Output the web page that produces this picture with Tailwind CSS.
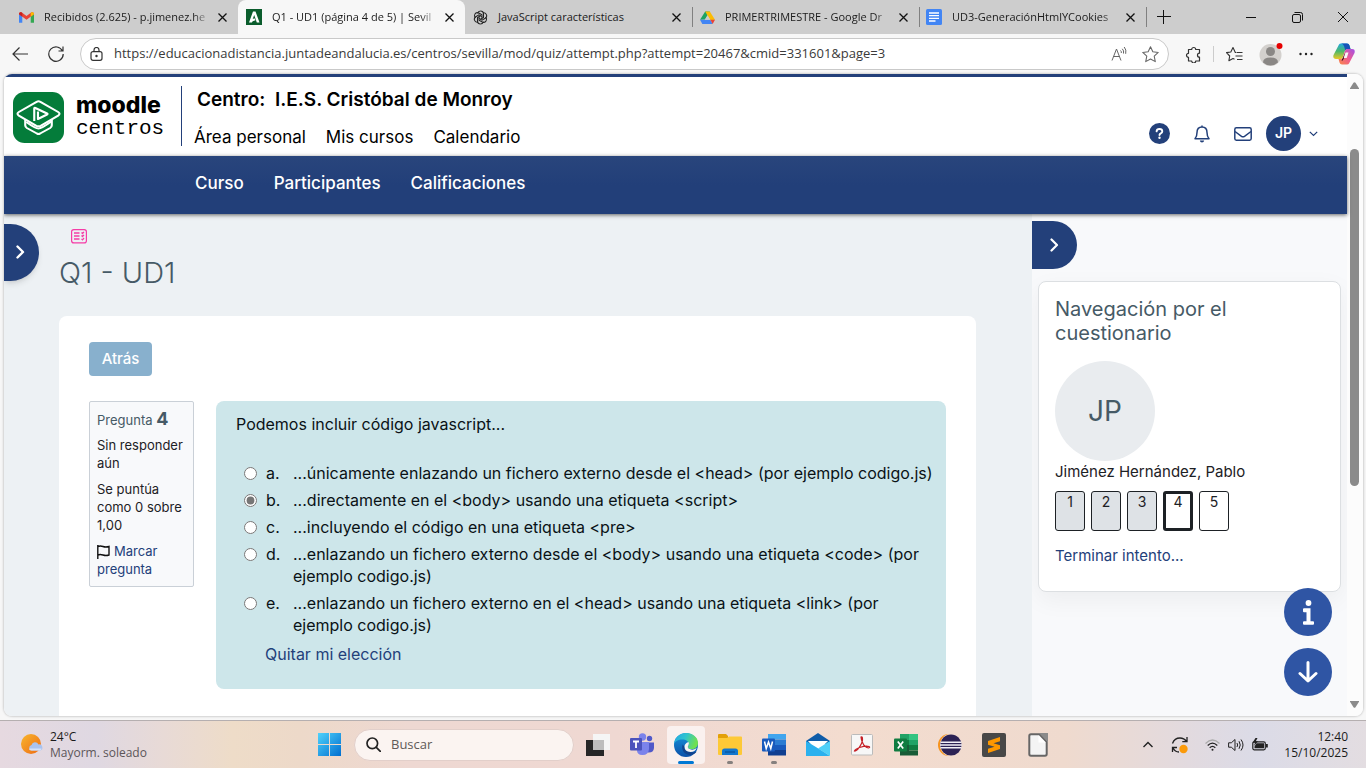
<!DOCTYPE html>
<html lang="es">
<head>
<meta charset="utf-8">
<title>Q1 - UD1 (página 4 de 5) | Sevilla</title>
<script src="https://cdn.jsdelivr.net/npm/@tailwindcss/browser@4"></script>
</head>
<body class="flex h-screen flex-col overflow-hidden bg-[#f7f7f7] font-['Open_Sans',sans-serif] text-xs text-[#1b1b1b]">

<!-- Tab strip -->
<header>
  <div class="flex h-[34px] items-stretch bg-[#cdcdcd] pl-[11px] text-[11px]" role="tablist">
    <div class="flex w-[227px] items-center pl-2 pr-2" role="tab">
      <svg class="h-[15px] w-[15px] shrink-0" viewBox="0 0 16 16"><path d="M0 4v9.500h3.500V7z" fill="#4285f4"/><path d="M16 4v9.500h-3.500V7z" fill="#34a853"/><path d="M0 4.500C0 2 2 2 3 2.700l5 3.800 5-3.800c1-.700 3-.700 3 1.800L8 10.500z" fill="#ea4335"/><path d="M12.500 3v4.200L16 4.500C16 2 14 2 13 2.700z" fill="#fbbc04"/><path d="M0 4.500C0 2.500 1.500 2 3 2.700l.5.400v4.100z" fill="#c5221f"/></svg>
      <span class="ml-[10px] flex-1 whitespace-nowrap mask-r-from-90%">Recibidos (2.625) - p.jimenez.he</span>
      <button class="ml-1 grid h-4 w-4 place-items-center" aria-label="Cerrar pestaña"><svg class="h-[9px] w-[9px]" viewBox="0 0 9 9" stroke="#111" stroke-width="1.300"><path d="M.5.5l8 8M8.500.5l-8 8"/></svg></button>
    </div>
    <div class="flex w-[227px] items-center rounded-t-lg bg-[#f7f7f7] pl-2 pr-2" role="tab" aria-selected="true">
      <svg class="h-4 w-4 shrink-0" viewBox="0 0 16 16"><path fill="#0a5c2c" d="M0 0h16v16H0z"/><path d="M3 13.500 7 2.500h2.500l4 11h-2.700L8.200 6l-1.500 4 1.800-.700 1 2-2.800 1-.8 1.200z" fill="#fff"/></svg>
      <span class="ml-[10px] flex-1 whitespace-nowrap mask-r-from-90%">Q1 - UD1 (página 4 de 5) | Sevil</span>
      <button class="ml-1 grid h-4 w-4 place-items-center" aria-label="Cerrar pestaña"><svg class="h-[9px] w-[9px]" viewBox="0 0 9 9" stroke="#111" stroke-width="1.300"><path d="M.5.5l8 8M8.500.5l-8 8"/></svg></button>
    </div>
    <div class="flex w-[227px] items-center pl-2 pr-2" role="tab">
      <svg class="h-[15px] w-[15px] shrink-0" viewBox="0 0 16 16" fill="none" stroke="#222" stroke-width="1.100"><g id="petal"><path d="M8 1a3.200 3.200 0 0 1 3.200 3v4L8 9.800"/><path d="M8 1a3.200 3.200 0 0 0-3 2.500"/></g><use href="#petal" transform="rotate(60 8 8)"/><use href="#petal" transform="rotate(120 8 8)"/><use href="#petal" transform="rotate(180 8 8)"/><use href="#petal" transform="rotate(240 8 8)"/><use href="#petal" transform="rotate(300 8 8)"/></svg>
      <span class="ml-[10px] flex-1 whitespace-nowrap">JavaScript características</span>
      <button class="ml-1 grid h-4 w-4 place-items-center" aria-label="Cerrar pestaña"><svg class="h-[9px] w-[9px]" viewBox="0 0 9 9" stroke="#111" stroke-width="1.300"><path d="M.5.5l8 8M8.500.5l-8 8"/></svg></button>
    </div>
    <span class="-mr-px my-[7px] w-px bg-[#808080]"></span>
    <div class="flex w-[227px] items-center pl-2 pr-2" role="tab">
      <svg class="h-[15px] w-[15px] shrink-0" viewBox="0 0 16 16"><path d="M5.500 1.500h5L5.500 10 0 10.500z" fill="#1ea362"/><path d="M5.500 1.500h5l5.500 9-5 .500z" fill="#fbbc04"/><path d="M0 10.500h11L13.500 15h-11z" fill="#4285f4"/><path d="M11 10.500h5L13.500 15z" fill="#ea4335"/><path d="M8 5.500 5 10.500h6z" fill="#cdcdcd"/></svg>
      <span class="ml-[10px] flex-1 whitespace-nowrap mask-r-from-90%">PRIMERTRIMESTRE - Google Dr</span>
      <button class="ml-1 grid h-4 w-4 place-items-center" aria-label="Cerrar pestaña"><svg class="h-[9px] w-[9px]" viewBox="0 0 9 9" stroke="#111" stroke-width="1.300"><path d="M.5.5l8 8M8.500.5l-8 8"/></svg></button>
    </div>
    <span class="-mr-px my-[7px] w-px bg-[#808080]"></span>
    <div class="flex w-[227px] items-center pl-[7px] pr-2" role="tab">
      <svg class="h-4 w-4 shrink-0" viewBox="0 0 16 16"><rect width="16" height="16" rx="1.500" fill="#4285f4"/><path d="M3 4h10M3 6.700h10M3 9.400h10M3 12h6.500" stroke="#fff" stroke-width="1.300"/></svg>
      <span class="ml-[10px] flex-1 whitespace-nowrap mask-r-from-90%">UD3-GeneraciónHtmlYCookies</span>
      <button class="ml-1 grid h-4 w-4 place-items-center" aria-label="Cerrar pestaña"><svg class="h-[9px] w-[9px]" viewBox="0 0 9 9" stroke="#111" stroke-width="1.300"><path d="M.5.5l8 8M8.500.5l-8 8"/></svg></button>
    </div>
    <span class="my-[7px] w-px bg-[#808080]"></span>
    <button class="ml-[7px] grid w-5 place-items-center" aria-label="Nueva pestaña"><svg class="h-[14px] w-[14px]" viewBox="0 0 14 14" stroke="#111"><path d="M0 6.500h14M6.500 0v14"/></svg></button>
    <div class="ml-auto flex">
      <button class="grid w-[46px] place-items-center" aria-label="Minimizar"><svg class="h-[10px] w-[10px]" viewBox="0 0 10 10" stroke="#111"><path d="M0 5.500h10"/></svg></button>
      <button class="grid w-[46px] place-items-center" aria-label="Restaurar"><svg class="h-[11px] w-[11px]" viewBox="0 0 11 11" fill="none" stroke="#111"><rect x=".5" y="2.500" width="8" height="8" rx="1.500"/><path d="M2.500.5h6a2 2 0 0 1 2 2v6"/></svg></button>
      <button class="grid w-[46px] place-items-center" aria-label="Cerrar"><svg class="h-[10px] w-[10px]" viewBox="0 0 10 10" stroke="#111"><path d="M0 0l10 10M10 0 0 10"/></svg></button>
    </div>
  </div>

  <!-- Toolbar -->
  <div class="flex h-[40px] items-center pl-3 pr-[11px]">
    <button aria-label="Atrás"><svg class="h-4 w-4" viewBox="0 0 16 16" fill="none" stroke="#333" stroke-width="1.200"><path d="M16 8H1M7.500 1.500 1 8l6.500 6.500"/></svg></button>
    <button class="ml-5" aria-label="Actualizar"><svg class="h-4 w-4" viewBox="0 0 16 16" fill="none" stroke="#333" stroke-width="1.200"><path d="M14.500 5A7.200 7.200 0 1 0 15.200 8M15 .5V5h-4.500"/></svg></button>
    <div class="ml-4 flex h-8 flex-1 items-center rounded-full border border-[#c9c9c9] bg-white pl-[9px] pr-[9px]">
      <svg class="h-[14px] w-[13px]" viewBox="0 0 13 14" fill="none" stroke="#333" stroke-width="1.200"><rect x="1" y="4.600" width="11" height="8.700" rx="2"/><path d="M4 4.500V3a2.500 2.500 0 0 1 5 0v1.500"/><circle cx="6.500" cy="9" r=".6" fill="#333"/></svg>
      <input class="ml-[11px] min-w-0 flex-1 text-[13px] text-[#3a3a3a] outline-none" aria-label="Dirección" value="https://educacionadistancia.juntadeandalucia.es/centros/sevilla/mod/quiz/attempt.php?attempt=20467&amp;cmid=331601&amp;page=3">
      <button aria-label="Leer en voz alta"><svg class="h-4 w-4" viewBox="0 0 16 16" fill="none" stroke="#666" stroke-width="1"><path d="M1 14.500 5.500 3 10 14.500M2.500 10.500h6M9.500 4.500q1.200 1 .8 2.500M11.300 2.800q1.900 1.900 1.200 4.700M13.200 1q2.500 2.800 1.500 6.800"/></svg></button>
      <button class="ml-[15px]" aria-label="Añadir a favoritos"><svg class="h-[17px] w-[17px]" viewBox="0 0 16 16" fill="none" stroke="#666" stroke-linejoin="round"><path d="m8 .8 2.200 4.700 5.100.6-3.800 3.500 1 5.100L8 12.200l-4.500 2.500 1-5.100L.7 6.100l5.100-.6z"/></svg></button>
    </div>
    <button class="ml-4" aria-label="Extensiones"><svg class="h-[17px] w-[17px]" viewBox="0 0 17 17" fill="none" stroke="#333" stroke-width="1.200" stroke-linejoin="round"><path d="M3.500 3.500h3.200a2 2 0 1 1 4 0H14.500v3.700a2 2 0 1 0 0 4V15h-3.800a2 2 0 1 1-4 0H3.500v-3.700a2 2 0 1 1 0-4z"/></svg></button>
    <span class="ml-[11px] h-4 w-px bg-[#ccc]"></span>
    <button class="ml-3" aria-label="Favoritos"><svg class="h-[17px] w-[17px]" viewBox="0 0 17 17" fill="none" stroke="#333" stroke-width="1.100" stroke-linejoin="round"><path d="M10 6.500H9.300L7 1.500 4.800 6l-4.300.6L3.700 10l-.8 4.700L7 12.500l1.500.7M10.500 6.500H16.500M9.500 10h7M11 13.500h5.500"/></svg></button>
    <button class="ml-4" aria-label="Perfil"><svg class="h-6 w-6" viewBox="0 0 24 24"><circle cx="11.500" cy="13" r="11" fill="#d3d0cd"/><circle cx="11.500" cy="9.500" r="4.500" fill="#8a8785"/><path d="M4 20.500q0-5 7.500-5t7.500 5a11 11 0 0 1-15 0" fill="#8a8785"/><circle cx="20.500" cy="4" r="3" fill="#e60000"/></svg></button>
    <button class="ml-4" aria-label="Más"><svg class="h-4 w-[14px]" viewBox="0 0 14 16" fill="#222"><circle cx="1.500" cy="8" r="1.200"/><circle cx="7" cy="8" r="1.200"/><circle cx="12.500" cy="8" r="1.200"/></svg></button>
    <button class="ml-5" aria-label="Copilot"><svg class="h-[22px] w-[22px]" viewBox="0 0 22 22"><defs><linearGradient id="cpA" x1="0" y1="0" x2="0" y2="1"><stop offset="0" stop-color="#22a7e0"/><stop offset=".5" stop-color="#4cb86a"/><stop offset="1" stop-color="#ecc825"/></linearGradient><linearGradient id="cpB" x1="1" y1="0" x2="0" y2="1"><stop offset="0" stop-color="#a050e8"/><stop offset=".5" stop-color="#ee5a90"/><stop offset="1" stop-color="#f98a45"/></linearGradient></defs><path d="M6 1.500Q6.500.5 8 .5h6q2 0 2.500 2l1 3.500h-3q-2 0-2.600 2L10 14q-.6 2-2.500 2H3Q-.5 16 .5 12z" fill="url(#cpA)"/><path d="M8 .5h6q2 0 2.500 2l1 3.500h-3q-1.500 0-2.200 1.500L11 3Q10.300.7 8 .5" fill="#1652b8"/><path d="M16 20.500q-.5 1-2 1H9q-2 0-2.500-2L5.500 16h2q2 0 2.500-2l1.900-6q.6-2 2.600-2H19q3.500 0 2.500 4z" fill="url(#cpB)"/><path d="M13 8.500 10.500 16q-.5 1.500-2 2" stroke="#f7f7f7" stroke-width="0"/><path d="M12.500 9.500h3l-1.800 5.500h-3z" fill="#f7f7f7"/></svg></button>
  </div>
</header>

<!-- Page viewport -->
<div class="relative ml-1 mr-[3px] flex min-h-0 flex-1 overflow-hidden rounded-lg bg-[#fcfcfc] font-[Inter,sans-serif] shadow-[0_0_2px_1px_#00000026]">
  <div class="flex min-w-0 flex-1 flex-col border-t-[3px] border-[#23407a]">
    <div class="flex h-[79px] shrink-0 bg-white text-black">
      <a href="#" class="mt-[14px] ml-[9px] flex h-[52px] w-[160px] items-center">
        <svg class="h-[51px] w-[51px] shrink-0" viewBox="0 0 48 51" preserveAspectRatio="none"><rect width="48" height="51" rx="11" fill="#047c3a"/><g fill="none" stroke="#fff" stroke-width="2" stroke-linejoin="round"><path d="M22.200 9.800Q24 8.800 25.800 9.800L42.500 20q2.500 1.700 0 3.600L26 33.800q-2 1-4 0L5.500 23.600Q3 21.700 5.500 20z"/><path d="M11.500 27.500v5.800Q11.500 35 13 36l9.500 5.500q1.500.8 3 0L35 36q1.500-1 1.500-2.700v-5.800"/><path d="M12.500 30q8.500 6.500 11.500 6.500T36 29.500"/><path d="M20 29V16.500q0-1 1-.5l11 5.500q1 .5 0 1L23.500 27V19.500"/></g></svg>
        <span class="ml-3 flex flex-col"><span class="text-[23px] leading-[24px] font-extrabold">moodle</span><span class="font-['Liberation_Mono',monospace] text-[21px] leading-[24px]">centros</span></span>
      </a>
      <div class="mt-[9px] ml-2 h-[60px] w-px bg-[#23407a]"></div>
      <div class="ml-3 flex flex-col">
        <div class="mt-[11px] ml-[3px] text-[19px] leading-6 font-semibold whitespace-pre">Centro:  I.E.S. Cristóbal de Monroy</div>
        <nav class="mt-[13px] flex gap-5 text-[17px] leading-6"><a href="#">Área personal</a><a href="#">Mis cursos</a><a href="#">Calendario</a></nav>
      </div>
      <div class="mt-[39px] mr-[29px] ml-auto flex h-[35px] items-center text-[#23407a]">
        <button aria-label="Ayuda"><svg class="h-[21px] w-[21px]" viewBox="0 0 21 21"><circle cx="10.500" cy="10.500" r="10.500" fill="#23407a"/><path d="M7.600 8.300Q7.800 6 10.500 6t2.800 2.200q0 1.400-1.500 2.100-1.300.6-1.300 1.700" fill="none" stroke="#fff" stroke-width="1.900" stroke-linecap="round"/><circle cx="10.500" cy="14.800" r="1.200" fill="#fff"/></svg></button>
        <button class="ml-6" aria-label="Notificaciones"><svg class="h-[18px] w-[16px]" viewBox="0 0 16 18" fill="none" stroke="#23407a" stroke-width="1.500" stroke-linejoin="round"><path d="M8 1.800v-1.300M1 13.800q2-2.300 2-6.300 0-5.500 5-5.500t5 5.500q0 4 2 6.300z"/><path d="M5.800 15.500h4.400q-.3 2-2.200 2t-2.200-2z" fill="#23407a" stroke="none"/></svg></button>
        <button class="ml-6" aria-label="Mensajes"><svg class="h-[14px] w-[18px]" viewBox="0 0 18 14" fill="none" stroke="#23407a" stroke-width="1.500"><rect x=".8" y=".8" width="16.400" height="12.400" rx="1.600"/><path d="M1 4.500 7.500 9.300q1.500 1 3 0L17 4.500"/></svg></button>
        <button class="ml-[14px] flex items-center" aria-label="Menú de usuario"><span class="grid h-[35px] w-[35px] place-items-center rounded-full bg-[#23407a] text-[14px] font-semibold text-white">JP</span><svg class="ml-2 h-[6px] w-[9px]" viewBox="0 0 9 6" fill="none" stroke="#23407a" stroke-width="1.200"><path d="m.8.8 3.700 3.700L8.200.8"/></svg></button>
      </div>
    </div>

    <nav class="z-10 flex h-[58px] shrink-0 items-center gap-[30px] bg-linear-to-b from-[#29457c] to-[#223f79] to-50% pb-[3px] pl-[191px] text-[17px] font-medium text-white shadow-[0_1px_4px_#00000099]">
      <a href="#">Curso</a><a href="#">Participantes</a><a href="#">Calificaciones</a>
    </nav>

    <div class="flex min-h-0 flex-1">
      <main class="relative flex min-w-0 flex-1 flex-col bg-[#edf1f4] pr-14 pl-[55px]">
        <button class="absolute top-[10px] left-0 grid h-[57px] w-[35px] place-items-center rounded-r-full bg-[#23407a] pr-[2px] pb-[2px] shadow-md" aria-label="Abrir índice del curso"><svg class="h-[14px] w-[9px]" viewBox="0 0 9 14" fill="none" stroke="#fff" stroke-width="2.400" stroke-linecap="round" stroke-linejoin="round"><path d="m1.500 1.500 5.500 5.500-5.500 5.500"/></svg></button>
        <svg class="mt-[15px] ml-3 h-[15px] w-4 shrink-0" viewBox="0 0 16 15" fill="none" stroke="#f53ca6"><rect x=".6" y=".6" width="14.800" height="13.300" rx="2.200" stroke-width="1.200"/><path d="M3 4h5.500M3 7h5.500M3 10h5.500" stroke-width="1.500"/><path d="m10.500 3.500 1 1 1.500-1.700M10.500 6.500l1 1L13 5.800M10.500 9.800l1 1L13 9" stroke-width="1.200"/></svg>
        <h1 class="mt-[11px] text-[29px] leading-[36px] font-light text-[#465a66]">Q1 - UD1</h1>
        <section class="mt-[25px] flex-1 rounded-t-lg bg-white px-[30px] pt-[26px]">
          <button class="h-[34px] w-[63px] rounded bg-[#88b0cd] text-[15px] font-medium text-white">Atrás</button>
          <div class="mt-[25px] flex items-start gap-[22px]">
            <aside class="w-[105px] shrink-0 rounded-xs border border-[#cad0d7] bg-[#f8f9fb] pt-2 pb-2 pl-[7px] text-[13px] leading-[18px] text-[#1d2125]">
              <h3 class="h-[18px] text-[#465a66]">Pregunta <span class="text-[18px] font-bold">4</span></h3>
              <div class="mt-2">Sin responder<br>aún</div>
              <div class="mt-2">Se puntúa<br>como 0 sobre<br>1,00</div>
              <a href="#" class="mt-[8px] block text-[#23407a]"><svg class="mr-1 inline h-[14px] w-[13px]" viewBox="0 0 13 14" fill="none" stroke="#111" stroke-width="1.400"><path d="M.8 0v14M.8 1.500q2.500-1 5.200 0t6 0v8.500q-3 1-6 0t-5.200 0"/></svg>Marcar<br>pregunta</a>
            </aside>
            <form class="min-w-0 flex-1 rounded-lg bg-[#cde6ea] pt-3 pr-3 pb-6 pl-5 text-[16px] leading-[22px] text-[#0a1216]">
              <p>Podemos incluir código javascript...</p>
              <div class="mt-[27px] ml-2 flex flex-col gap-[5px]">
                <label class="flex"><input type="radio" name="q4" class="mt-[5px] h-[13px] w-[13px] shrink-0 accent-[#767676]"><span class="ml-[9px] w-[27px] shrink-0">a.</span><span class="whitespace-nowrap">...únicamente enlazando un fichero externo desde el &lt;head&gt; (por ejemplo codigo.js)</span></label>
                <label class="flex"><input type="radio" name="q4" checked class="mt-[5px] h-[13px] w-[13px] shrink-0 accent-[#767676]"><span class="ml-[9px] w-[27px] shrink-0">b.</span><span>...directamente en el &lt;body&gt; usando una etiqueta &lt;script&gt;</span></label>
                <label class="flex"><input type="radio" name="q4" class="mt-[5px] h-[13px] w-[13px] shrink-0 accent-[#767676]"><span class="ml-[9px] w-[27px] shrink-0">c.</span><span>...incluyendo el código en una etiqueta &lt;pre&gt;</span></label>
                <label class="flex"><input type="radio" name="q4" class="mt-[5px] h-[13px] w-[13px] shrink-0 accent-[#767676]"><span class="ml-[9px] w-[27px] shrink-0">d.</span><span>...enlazando un fichero externo desde el &lt;body&gt; usando una etiqueta &lt;code&gt; (por<br>ejemplo codigo.js)</span></label>
                <label class="flex"><input type="radio" name="q4" class="mt-[5px] h-[13px] w-[13px] shrink-0 accent-[#767676]"><span class="ml-[9px] w-[27px] shrink-0">e.</span><span>...enlazando un fichero externo en el &lt;head&gt; usando una etiqueta &lt;link&gt; (por<br>ejemplo codigo.js)</span></label>
              </div>
              <a href="#" class="mt-[7px] ml-[29px] block text-[#23407a]">Quitar mi elección</a>
            </form>
          </div>
        </section>
      </main>

      <aside class="w-[315px] shrink-0 bg-[#f8f9fb] pt-[7px]">
        <button class="grid h-12 w-[45px] place-items-center rounded-r-full bg-[#23407a]" aria-label="Cerrar panel lateral"><svg class="h-[14px] w-[9px]" viewBox="0 0 9 14" fill="none" stroke="#fff" stroke-width="2.200" stroke-linecap="round" stroke-linejoin="round"><path d="m1.500 1.500 5.500 5.500-5.500 5.500"/></svg></button>
        <section class="mx-[6px] mt-3 rounded-lg border border-[#dcdfe2] bg-white px-4 pt-[15px] pb-6 text-[15px] leading-[22px] shadow-[0_8px_24px_#0000000d]">
          <h2 class="text-[20px] leading-6 text-[#465a66]">Navegación por el<br>cuestionario</h2>
          <div class="mt-4 grid h-[100px] w-[100px] place-items-center rounded-full bg-[#e9ecef] text-[28px] text-[#465a66]">JP</div>
          <div class="text-[#1d2125]">Jiménez Hernández, Pablo</div>
          <nav class="mt-2 flex gap-[6px] text-center text-[14px] leading-5 text-[#1d2125]">
            <a href="#" class="h-10 w-[30px] rounded-[3px] border border-[#1d2125] bg-[#dee2e6]">1</a>
            <a href="#" class="h-10 w-[30px] rounded-[3px] border border-[#1d2125] bg-[#dee2e6]">2</a>
            <a href="#" class="h-10 w-[30px] rounded-[3px] border border-[#1d2125] bg-[#dee2e6]">3</a>
            <a href="#" class="h-10 w-[30px] rounded-[3px] border-3 border-[#1d2125] leading-4">4</a>
            <a href="#" class="h-10 w-[30px] rounded-[3px] border border-[#1d2125]">5</a>
          </nav>
          <a href="#" class="mt-[14px] block text-[#23407a]">Terminar intento...</a>
        </section>
      </aside>
    </div>
  </div>

  <!-- Scroll bar -->
  <div class="flex w-4 flex-col items-center bg-[#fcfcfc] pt-2 pb-2 pr-px">
    <svg class="h-[7px] w-[9px]" viewBox="0 0 9 7" fill="#8b8b8b"><path d="M3.500.7q1-1 2 0L9 6.200V7H0v-.8z"/></svg>
    <div class="mt-[60px] h-[337px] w-[9px] rounded-full bg-[#8b8b8b]"></div>
    <svg class="mt-auto h-[7px] w-[9px]" viewBox="0 0 9 7" fill="#8b8b8b"><path d="M3.500 6.300q1 1 2 0L9 .8V0H0v.8z"/></svg>
  </div>

  <!-- Floating actions -->
  <div class="absolute right-[31px] bottom-[20px] z-20 flex flex-col gap-3">
    <button class="grid h-12 w-12 place-items-center rounded-full bg-[#2f55a4]" aria-label="Información"><svg class="h-[25px] w-[11px]" viewBox="0 0 11 25" fill="#fff"><circle cx="5.500" cy="3" r="2.900"/><path d="M1 8.300h6.500v12.900H10a1 1 0 0 1 1 1v1.600a1 1 0 0 1-1 1H1a1 1 0 0 1-1-1v-1.600a1 1 0 0 1 1-1h2.500v-9H1a1 1 0 0 1-1-1V9.300a1 1 0 0 1 1-1"/></svg></button>
    <button class="grid h-12 w-12 place-items-center rounded-full bg-[#2f55a4]" aria-label="Bajar"><svg class="h-[22px] w-5" viewBox="0 0 20 22" fill="none" stroke="#fff" stroke-width="3" stroke-linecap="round" stroke-linejoin="round"><path d="M10 1.500v18M2 12.500l8 7.500 8-7.500"/></svg></button>
  </div>
</div>

<!-- Taskbar -->
<footer class="mt-1 flex h-[48px] shrink-0 items-center border-t border-[#b5afb0] bg-[linear-gradient(90deg,#e6d9e0_0%,#dfd8e2_7%,#e8dad6_12%,#eedcc8_17%,#edd9c9_22%,#eed8d2_30%,#efd8d2_45%,#f3dccf_62%,#efdace_78%,#e2dadf_87%,#dbdbe7_92%,#e3dde1_100%)]">
  <button class="flex w-[308px] items-center pl-5 text-left">
    <svg class="h-6 w-6" viewBox="0 0 24 24"><defs><linearGradient id="sun" x1="0" y1="0" x2="1" y2="1"><stop offset="0" stop-color="#f8b62d"/><stop offset="1" stop-color="#ee6a13"/></linearGradient></defs><circle cx="11" cy="11" r="10" fill="url(#sun)"/><path d="M11.500 17.500a2.800 2.800 0 0 1 0-5.500 3.800 3.800 0 0 1 7-.6 3 3 0 0 1 1.500 6.100z" fill="#a9c3f0"/><path d="M11 17.500q-2-.2-2-2h12.500q-.2 2-2 2z" fill="#d3e2fb"/></svg>
    <span class="ml-[6px] flex flex-col leading-4"><span>24°C</span><span class="text-[#5c5659]">Mayorm. soleado</span></span>
  </button>
  <button class="ml-[9px] grid h-6 w-6 place-items-center" aria-label="Inicio"><svg class="h-[23px] w-[23px]" viewBox="0 0 23 23"><defs><linearGradient id="win" x1="0" y1="0" x2="23" y2="23" gradientUnits="userSpaceOnUse"><stop offset="0" stop-color="#4fd2fb"/><stop offset="1" stop-color="#006ed0"/></linearGradient></defs><path fill="url(#win)" d="M0 0h11v11H0zM12 0h11v11H12zM0 12h11v11H0zM12 12h11v11H12z"/></svg></button>
  <label class="ml-[13px] flex h-8 w-[220px] items-center rounded-full border border-[#e2cfca] bg-[#fbf4f1] pl-[11px]">
    <svg class="h-[15px] w-[15px]" viewBox="0 0 15 15" fill="none" stroke="#222" stroke-width="1.700" stroke-linecap="round"><circle cx="6.300" cy="6.300" r="5.300"/><path d="m10.300 10.300 4 4"/></svg>
    <input type="search" placeholder="Buscar" aria-label="Buscar" class="ml-[10px] w-36 text-[13px] outline-none placeholder:text-[#605a58]">
  </label>
  <div class="ml-[2px] flex">
    <button class="grid h-11 w-11 place-items-center" aria-label="Vista de tareas"><svg class="h-6 w-6" viewBox="0 0 24 24"><path d="M0 7h18v16H0z" fill="#262626"/><path d="M7 1h17v16H7z" fill="#f5f5f5"/><path d="M7 7h11v10H7z" fill="#bdbdbd"/></svg></button>
    <button class="grid h-11 w-11 place-items-center" aria-label="Teams"><svg class="h-6 w-6" viewBox="0 0 24 24"><circle cx="19.500" cy="5.500" r="2.700" fill="#5059c9"/><path d="M15 9.500h9V15q-.5 5-6 4.500z" fill="#5059c9"/><circle cx="12.500" cy="4" r="3.700" fill="#7b83eb"/><path d="M7 9h12v7q-.5 6-6.500 6T7 16z" fill="#7b83eb"/><rect y="5" width="12" height="12.500" rx="1" fill="#4b53bc"/><path d="M3 8.500h6M6 8.500v6.500" stroke="#fff" stroke-width="1.800"/></svg></button>
    <button class="relative grid h-11 w-11 place-items-center" aria-label="Edge"><span class="absolute inset-x-[3px] inset-y-[3px] rounded bg-[#faf1ef]"></span><svg class="relative h-6 w-6" viewBox="0 0 24 24"><defs><linearGradient id="edA" x1="0" y1="0" x2="1" y2=".3"><stop offset="0" stop-color="#24a6e4"/><stop offset=".5" stop-color="#2fc3cf"/><stop offset="1" stop-color="#6fe052"/></linearGradient><linearGradient id="edB" x1="0" y1="0" x2="0" y2="1"><stop offset="0" stop-color="#1595dd"/><stop offset="1" stop-color="#0c50a8"/></linearGradient></defs><circle cx="12" cy="12" r="12" fill="url(#edB)"/><path d="M0 11C.5 4 6 0 12 0c7 0 12 4.500 12 10 0 4-3 6-6 6s-4.200-1-4.200-1.800 1-1.200 1-3C14.800 8.500 12 6.500 8.500 6.500 4 6.500 1 8.500 0 11z" fill="url(#edA)"/><path d="M8.700 11.500c-2 5 2 10.500 7 10.500 3 0 5.500-1.500 7-3.500-3.500 1.500-12.500 1-12.500-5z" fill="#12438c"/><path d="M14.500 9q.8 1.500 0 3.300-1.500 2 0 3.200 4 2.500 8.200-.5-1.500 4-6.200 4-6-.5-6-5.500 0-3 4-4.500z" fill="#f8f4f2"/></svg><span class="absolute bottom-[3px] left-[14px] h-[3px] w-4 rounded bg-[#0078d4]"></span></button>
    <button class="relative grid h-11 w-11 place-items-center" aria-label="Explorador de archivos"><svg class="h-6 w-6" viewBox="0 0 24 24"><path d="M0 2q0-1 1-1h7l2 2v3H0z" fill="#e3a008"/><path d="M0 5h9l2-1.500h12q1 0 1 1V21q0 1-1 1H1q-1 0-1-1z" fill="#fdc937"/><path d="M4 22v-4q0-2.500 2.500-2.500h11Q20 15.500 20 18v4z" fill="#1377ce"/><path d="M7 19h10" stroke="#0d58a3" stroke-width="1.500"/></svg><span class="absolute bottom-[3px] left-[19px] h-[3px] w-[6px] rounded bg-[#85807e]"></span></button>
    <button class="relative grid h-11 w-11 place-items-center" aria-label="Word"><svg class="h-6 w-6" viewBox="0 0 24 24"><path d="M6 1h18v5.500H6z" fill="#41a5ee"/><path d="M6 6.500h18V12H6z" fill="#2b7cd3"/><path d="M6 12h18v5H6z" fill="#185abd"/><path d="M6 17h18v5.500H6z" fill="#103f91"/><rect y="5.500" width="13" height="13" rx="1" fill="#185abd"/><path d="m2.500 8.500 1.700 7 2.300-6.500 2.300 6.500 1.700-7" fill="none" stroke="#fff" stroke-width="1.500"/></svg><span class="absolute bottom-[3px] left-[19px] h-[3px] w-[6px] rounded bg-[#85807e]"></span></button>
    <button class="grid h-11 w-11 place-items-center" aria-label="Correo"><svg class="h-6 w-6" viewBox="0 0 24 24"><path d="M0 8 12 0l12 8v3H0z" fill="#0f5ca8"/><path d="M2 8h20l-8 8H9z" fill="#fff"/><path d="M0 8l14 8.500L24 23H0z" fill="#2bb1ee"/><path d="M24 8v15L12 15.500z" fill="#50d0f8"/></svg></button>
    <button class="grid h-11 w-11 place-items-center" aria-label="Acrobat"><svg class="h-[22px] w-[22px]" viewBox="0 0 22 22"><rect x=".5" y=".5" width="21" height="20.500" rx="1" fill="#f7f7f7" stroke="#bbb"/><path d="M10 3q1.500-1 1.500 2.500 0 3-3 7.500t-5 4q.5-2 6-3.800t8.500-.7q1.500 1-.5 1.500-3.500-.5-5.500-4.500T10 3z" fill="none" stroke="#c51f26" stroke-width="1.200"/></svg></button>
    <button class="grid h-11 w-11 place-items-center" aria-label="Excel"><svg class="h-6 w-6" viewBox="0 0 24 24"><path d="M6 1h9v6H6z" fill="#21a366"/><path d="M15 1h9v6h-9z" fill="#33c481"/><path d="M6 7h9v5H6z" fill="#107c41"/><path d="M15 7h9v5h-9z" fill="#21a366"/><path d="M6 12h9v10.500H6z" fill="#185c37"/><path d="M15 12h9v5.500h-9z" fill="#107c41"/><path d="M15 17.500h9v5h-9z" fill="#185c37"/><rect y="5.500" width="13" height="13" rx="1" fill="#107c41"/><path d="m3.800 8.500 5.400 7M9.200 8.500l-5.400 7" stroke="#fff" stroke-width="1.700"/></svg></button>
    <button class="grid h-11 w-11 place-items-center" aria-label="Eclipse"><svg class="h-6 w-6" viewBox="0 0 24 24"><circle cx="11" cy="12" r="11" fill="#f7941e"/><circle cx="13.300" cy="12" r="11.300" fill="#efd9cf"/><circle cx="13" cy="12" r="10.600" fill="#2c2255"/><path d="M2.500 9.300h21M2 12h22M2.500 14.700h21" stroke="#f2f0f8" stroke-width="1.400"/></svg></button>
    <button class="grid h-11 w-11 place-items-center" aria-label="Sublime Text"><svg class="h-6 w-6" viewBox="0 0 24 24"><rect width="24" height="24" rx="2" fill="#484848"/><path d="M18 4v4.200l-6.500 2 6.500 2V16L6 20v-4.200l6.500-2-6.500-2V8z" fill="#ff9800"/></svg></button>
    <button class="grid h-11 w-11 place-items-center" aria-label="LibreOffice"><svg class="h-6 w-5" viewBox="0 0 20 24"><path d="M3 1.300h8.500l7.200 7.500V21q0 1.700-1.700 1.700H3Q1.300 22.700 1.300 21V3Q1.300 1.300 3 1.300z" fill="#f4f4f4" stroke="#666" stroke-width="2"/><path d="M11 0h9v9z" fill="#8b8b8b"/><path d="M10.500 2.500v7h7z" fill="#fff"/></svg></button>
  </div>
  <div class="mr-[18px] ml-auto flex items-center">
    <button aria-label="Iconos ocultos"><svg class="h-[7px] w-[10px]" viewBox="0 0 10 7" fill="none" stroke="#222" stroke-width="1.400"><path d="m.5 6 4.500-4.500L9.500 6"/></svg></button>
    <button class="ml-[18px]" aria-label="Actualizaciones"><svg class="h-[18px] w-[18px]" viewBox="0 0 18 18" fill="none" stroke="#222" stroke-width="1.300"><path d="M1.500 7.500Q3.500 2 9 2q4 0 6.500 3.500M16 1v4.700h-4.700M1.500 16v-4.500H6M2 12q2 4 6 4"/><circle cx="12.500" cy="13" r="4.200" fill="#fb9a0a" stroke="none"/></svg></button>
    <button class="ml-4 flex items-center gap-2" aria-label="Red, sonido y batería">
      <svg class="h-3 w-[15px]" viewBox="0 0 15 12" fill="none" stroke="#222" stroke-width="1.200"><path d="M.5 4.500q7-7 14 0" stroke="#aaa"/><path d="M2.700 6.500q4.800-4.600 9.600 0M4.700 8.700q2.800-2.700 5.600 0"/><circle cx="7.500" cy="10.700" r="1" fill="#222" stroke="none"/></svg>
      <svg class="h-[14px] w-4" viewBox="0 0 16 14" fill="none" stroke="#222"><path d="M.6 4.800h2.700L7 1.500v11L3.300 9.200H.6zM9 5q1.200 2 0 4M11 3.200q2.500 3.800 0 7.600M13 1.500q4 5.500 0 11"/></svg>
      <svg class="h-[13px] w-4" viewBox="0 0 16 13"><rect x=".8" y="3.800" width="12.500" height="8" rx="1.500" fill="none" stroke="#222" stroke-width="1.200"/><path d="M4.500 5.300h7.500v5H2.500V8.500zM14 6h1.800v3.500H14z" fill="#222"/><path d="m3.500 0-3 4.800H3L2 8l4-4.700H3.800L5.500 0z" fill="#222"/></svg>
    </button>
    <button class="ml-4 text-right leading-4"><span class="block">12:40</span><span class="block">15/10/2025</span></button>
  </div>
</footer>
</body>
</html>
